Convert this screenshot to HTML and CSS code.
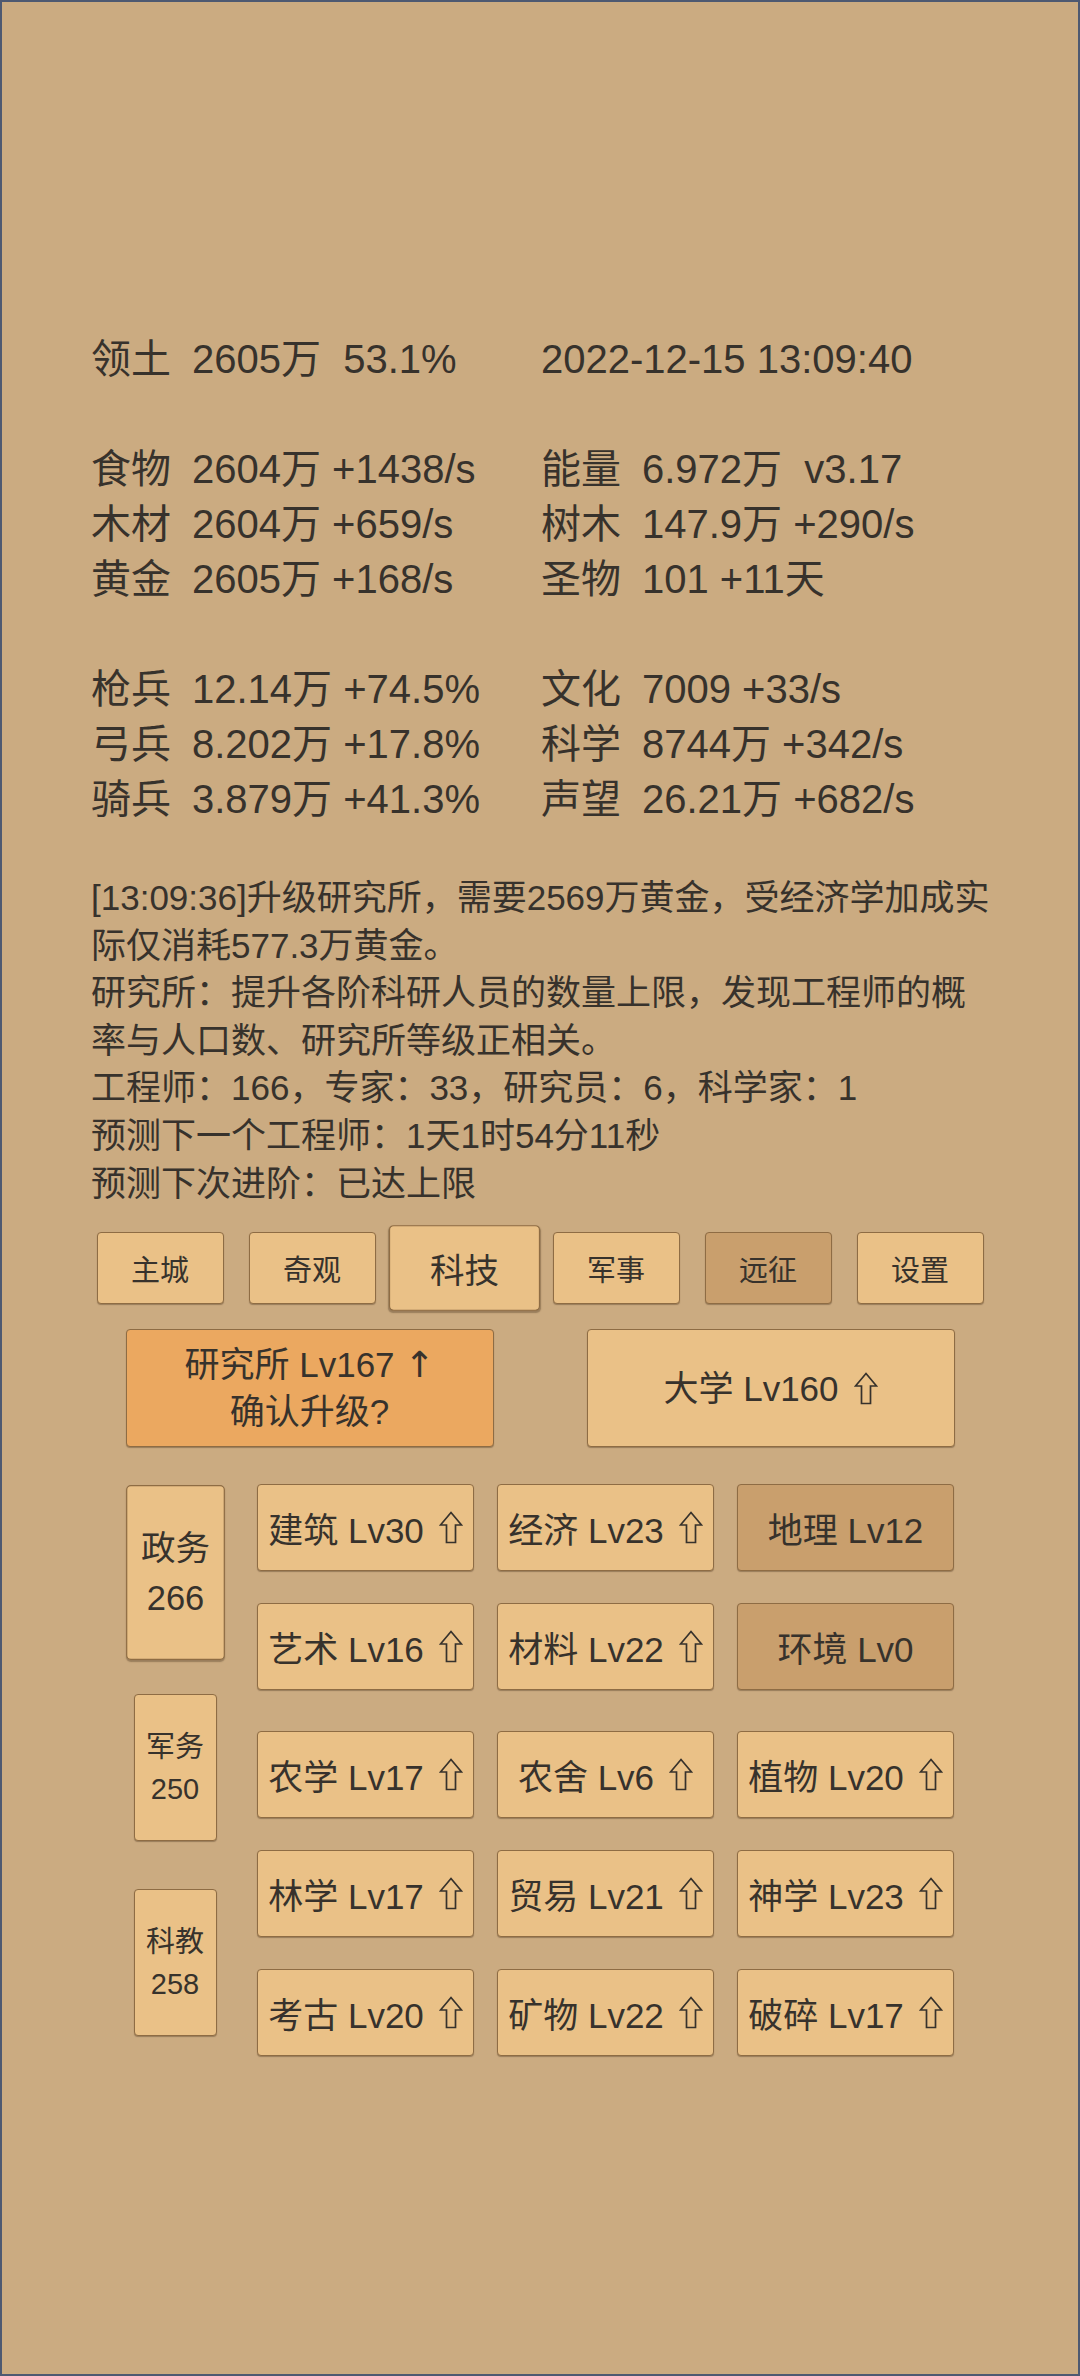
FILE: index.html
```html
<!DOCTYPE html>
<html lang="zh-CN">
<head>
<meta charset="utf-8">
<title>领土</title>
<link rel="stylesheet" href="styles.css">
</head>
<body>
<div class="page">
  <div class="stats">
    <div class="row"><div class="cell"><span class="k">领土</span><span class="v">2605万  53.1%</span></div><div class="cell"><span class="v">2022-12-15 13:09:40</span></div></div>
    <div class="row blank"></div>
    <div class="row"><div class="cell"><span class="k">食物</span><span class="v">2604万 +1438/s</span></div><div class="cell"><span class="k">能量</span><span class="v">6.972万  v3.17</span></div></div>
    <div class="row"><div class="cell"><span class="k">木材</span><span class="v">2604万 +659/s</span></div><div class="cell"><span class="k">树木</span><span class="v">147.9万 +290/s</span></div></div>
    <div class="row"><div class="cell"><span class="k">黄金</span><span class="v">2605万 +168/s</span></div><div class="cell"><span class="k">圣物</span><span class="v">101 +11天</span></div></div>
    <div class="row blank"></div>
    <div class="row"><div class="cell"><span class="k">枪兵</span><span class="v">12.14万 +74.5%</span></div><div class="cell"><span class="k">文化</span><span class="v">7009 +33/s</span></div></div>
    <div class="row"><div class="cell"><span class="k">弓兵</span><span class="v">8.202万 +17.8%</span></div><div class="cell"><span class="k">科学</span><span class="v">8744万 +342/s</span></div></div>
    <div class="row"><div class="cell"><span class="k">骑兵</span><span class="v">3.879万 +41.3%</span></div><div class="cell"><span class="k">声望</span><span class="v">26.21万 +682/s</span></div></div>
  </div>

  <div class="log">
    <p>[13:09:36]升级研究所，需要2569万黄金，受经济学加成实际仅消耗577.3万黄金。</p>
    <p>研究所：提升各阶科研人员的数量上限，发现工程师的概率与人口数、研究所等级正相关。</p>
    <p>工程师：166，专家：33，研究员：6，科学家：1</p>
    <p>预测下一个工程师：1天1时54分11秒</p>
    <p>预测下次进阶：已达上限</p>
  </div>

  <nav class="tabs">
    <div class="btn tab">主城</div>
    <div class="btn tab">奇观</div>
    <div class="btn tab active">科技</div>
    <div class="btn tab">军事</div>
    <div class="btn tab dim">远征</div>
    <div class="btn tab">设置</div>
  </nav>

  <div class="buildings">
    <div class="btn bld confirm"><span>研究所 Lv167 <span class="arrow">↑</span><br>确认升级?</span></div>
    <div class="btn bld">大学 Lv160<svg class="up" viewBox="0 0 24 33"><path d="M12 1.5 L22.5 14 L16.5 14 L16.5 31.5 L7.5 31.5 L7.5 14 L1.5 14 Z"/></svg></div>
  </div>

  <div class="tech">
    <div class="cats">
      <div class="btn cat active">政务<br>266</div>
      <div class="btn cat">军务<br>250</div>
      <div class="btn cat">科教<br>258</div>
    </div>
    <div class="groups">
      <div class="grid first">
        <div class="btn item">建筑 Lv30<svg class="up" viewBox="0 0 24 33"><path d="M12 1.5 L22.5 14 L16.5 14 L16.5 31.5 L7.5 31.5 L7.5 14 L1.5 14 Z"/></svg></div>
        <div class="btn item">经济 Lv23<svg class="up" viewBox="0 0 24 33"><path d="M12 1.5 L22.5 14 L16.5 14 L16.5 31.5 L7.5 31.5 L7.5 14 L1.5 14 Z"/></svg></div>
        <div class="btn item dim">地理 Lv12</div>
        <div class="btn item">艺术 Lv16<svg class="up" viewBox="0 0 24 33"><path d="M12 1.5 L22.5 14 L16.5 14 L16.5 31.5 L7.5 31.5 L7.5 14 L1.5 14 Z"/></svg></div>
        <div class="btn item">材料 Lv22<svg class="up" viewBox="0 0 24 33"><path d="M12 1.5 L22.5 14 L16.5 14 L16.5 31.5 L7.5 31.5 L7.5 14 L1.5 14 Z"/></svg></div>
        <div class="btn item dim">环境 Lv0</div>
      </div>
      <div class="grid">
        <div class="btn item">农学 Lv17<svg class="up" viewBox="0 0 24 33"><path d="M12 1.5 L22.5 14 L16.5 14 L16.5 31.5 L7.5 31.5 L7.5 14 L1.5 14 Z"/></svg></div>
        <div class="btn item">农舍 Lv6<svg class="up" viewBox="0 0 24 33"><path d="M12 1.5 L22.5 14 L16.5 14 L16.5 31.5 L7.5 31.5 L7.5 14 L1.5 14 Z"/></svg></div>
        <div class="btn item">植物 Lv20<svg class="up" viewBox="0 0 24 33"><path d="M12 1.5 L22.5 14 L16.5 14 L16.5 31.5 L7.5 31.5 L7.5 14 L1.5 14 Z"/></svg></div>
        <div class="btn item">林学 Lv17<svg class="up" viewBox="0 0 24 33"><path d="M12 1.5 L22.5 14 L16.5 14 L16.5 31.5 L7.5 31.5 L7.5 14 L1.5 14 Z"/></svg></div>
        <div class="btn item">贸易 Lv21<svg class="up" viewBox="0 0 24 33"><path d="M12 1.5 L22.5 14 L16.5 14 L16.5 31.5 L7.5 31.5 L7.5 14 L1.5 14 Z"/></svg></div>
        <div class="btn item">神学 Lv23<svg class="up" viewBox="0 0 24 33"><path d="M12 1.5 L22.5 14 L16.5 14 L16.5 31.5 L7.5 31.5 L7.5 14 L1.5 14 Z"/></svg></div>
        <div class="btn item">考古 Lv20<svg class="up" viewBox="0 0 24 33"><path d="M12 1.5 L22.5 14 L16.5 14 L16.5 31.5 L7.5 31.5 L7.5 14 L1.5 14 Z"/></svg></div>
        <div class="btn item">矿物 Lv22<svg class="up" viewBox="0 0 24 33"><path d="M12 1.5 L22.5 14 L16.5 14 L16.5 31.5 L7.5 31.5 L7.5 14 L1.5 14 Z"/></svg></div>
        <div class="btn item">破碎 Lv17<svg class="up" viewBox="0 0 24 33"><path d="M12 1.5 L22.5 14 L16.5 14 L16.5 31.5 L7.5 31.5 L7.5 14 L1.5 14 Z"/></svg></div>
      </div>
    </div>
  </div>
</div>
</body>
</html>
```

FILE: styles.css
```css
html, body {
  margin: 0;
  padding: 0;
}

body {
  background: #cbab81;
  color: #37322c;
  font-family: "Liberation Sans", "Noto Sans CJK SC", sans-serif;
}

.page {
  box-sizing: border-box;
  width: 1080px;
  height: 2376px;
  border: 2px solid #4e5971;
  padding: 330px 89px 0;
  overflow: hidden;
}

/* stats block */
.stats {
  font-size: 40px;
  line-height: 55px;
}

.row {
  display: grid;
  grid-template-columns: 450px 450px;
  height: 55px;
}

.cell {
  white-space: pre;
}

.k {
  display: inline-block;
  width: 101px;
}

/* log */
.log {
  margin-top: 47px;
  font-size: 35px;
  line-height: 47.6px;
  width: 904px;
}

.log p {
  margin: 0;
}

/* generic button */
.btn {
  box-sizing: border-box;
  background: #eac187;
  border: 1.5px solid #8e6c44;
  border-radius: 4px;
  box-shadow: 0 1px 1px rgba(60, 40, 20, 0.35);
  display: flex;
  align-items: center;
  justify-content: center;
  text-align: center;
  white-space: nowrap;
}

.btn.dim {
  background: #c99f6d;
}

/* tabs */
.tabs {
  margin-top: 25px;
  display: flex;
  justify-content: center;
  gap: 25px;
}

.tab {
  width: 127px;
  height: 72px;
  font-size: 29px;
}

.tab.active,
.cat.active {
  transform: scale(1.19);
}

/* buildings */
.buildings {
  margin-top: 25px;
  display: flex;
  justify-content: center;
  gap: 93px;
}

.bld {
  width: 368px;
  height: 118px;
  font-size: 35px;
  line-height: 47px;
}

.bld.confirm {
  background: #eba860;
}

.arrow {
  font-family: "DejaVu Sans", sans-serif;
  font-size: 36px;
}

/* tech section */
.tech {
  margin: 37px auto 0;
  width: 828px;
  display: flex;
  gap: 33px;
}

.cats {
  width: 98px;
  padding-top: 15px;
  display: flex;
  flex-direction: column;
  align-items: center;
  gap: 48px;
}

.cat {
  width: 83px;
  height: 147px;
  font-size: 29px;
  line-height: 42px;
}

.groups {
  display: flex;
  flex-direction: column;
  gap: 32px;
}

.grid {
  display: grid;
  grid-template-columns: repeat(3, 217px);
  grid-auto-rows: 87px;
  column-gap: 23px;
  row-gap: 32px;
}

.grid.first {
  margin-bottom: 9px;
}

.item {
  font-size: 35px;
}

.up {
  width: 24px;
  height: 33px;
  margin-left: 15px;
  fill: none;
  stroke: #37322c;
  stroke-width: 1.7;
  stroke-linejoin: miter;
}
```
